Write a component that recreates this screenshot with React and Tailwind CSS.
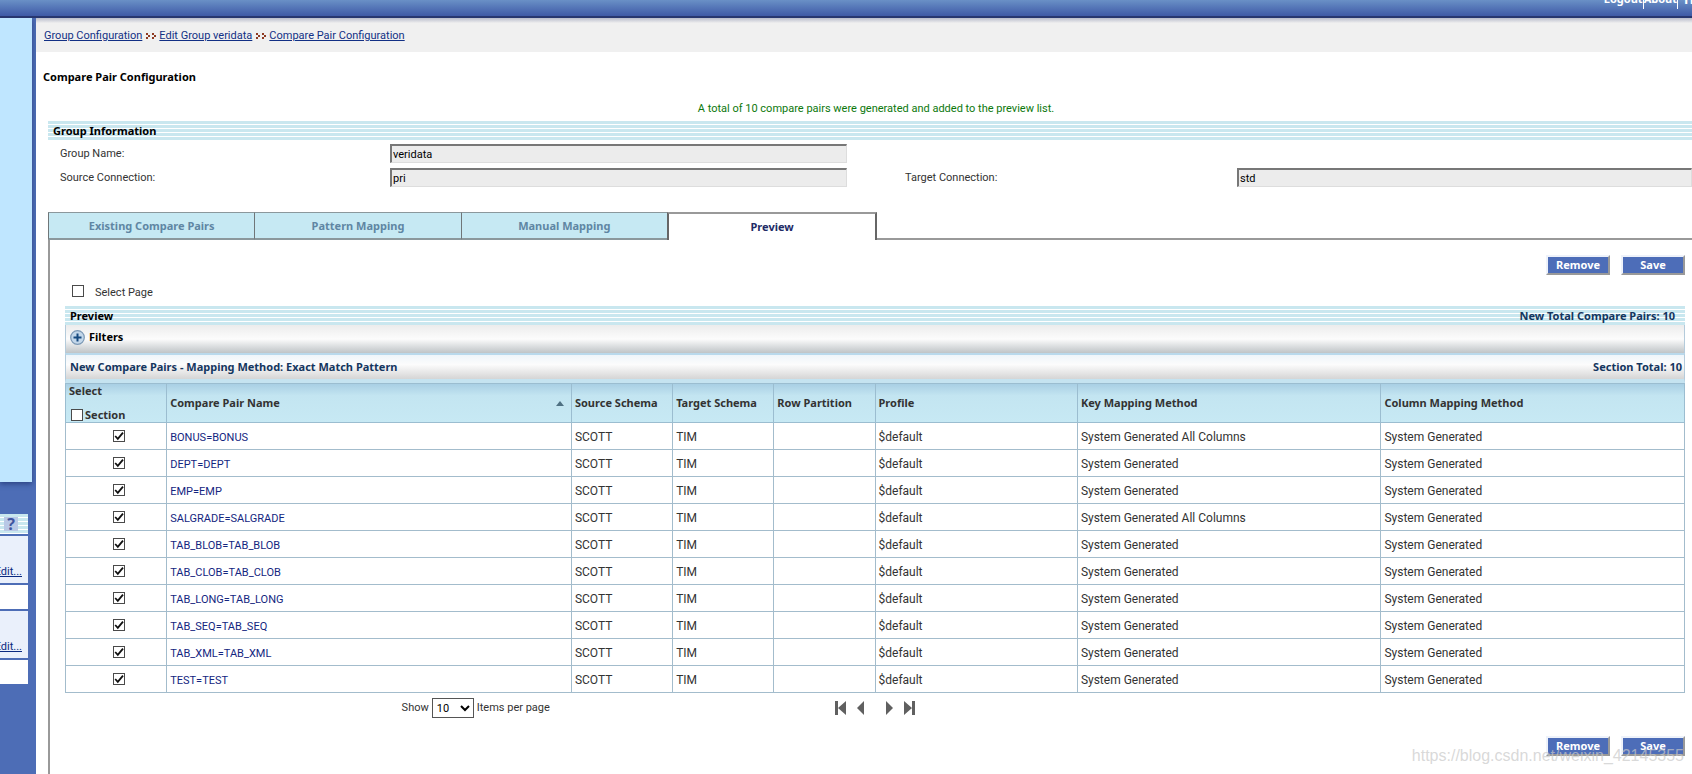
import { useState } from 'react';

const breadcrumbs = ['Group Configuration', 'Edit Group veridata', 'Compare Pair Configuration'];

const tabs = ['Existing Compare Pairs', 'Pattern Mapping', 'Manual Mapping', 'Preview'];

const comparePairs = [
  { table: 'BONUS', keyMapping: 'System Generated All Columns' },
  { table: 'DEPT', keyMapping: 'System Generated' },
  { table: 'EMP', keyMapping: 'System Generated' },
  { table: 'SALGRADE', keyMapping: 'System Generated All Columns' },
  { table: 'TAB_BLOB', keyMapping: 'System Generated' },
  { table: 'TAB_CLOB', keyMapping: 'System Generated' },
  { table: 'TAB_LONG', keyMapping: 'System Generated' },
  { table: 'TAB_SEQ', keyMapping: 'System Generated' },
  { table: 'TAB_XML', keyMapping: 'System Generated' },
  { table: 'TEST', keyMapping: 'System Generated' },
];

const stripes = 'bg-[repeating-linear-gradient(to_bottom,#c9e7ef_0px,#c9e7ef_3px,#ffffff_3px,#ffffff_4px)]';

const bold = "font-bold font-['Noto_Sans','DejaVu_Sans_Condensed',sans-serif]";

const Checkbox = ({ id, checked, onChange, label }) => (
  <span className="relative inline-block w-3 h-3 align-middle">
    <input
      id={id}
      type="checkbox"
      checked={checked}
      onChange={onChange}
      aria-label={label}
      className="block appearance-none w-3 h-3 bg-white border border-[#4a4a4a]"
    />
    {checked && (
      <svg viewBox="0 0 12 12" className="absolute inset-0 w-3 h-3 pointer-events-none">
        <path d="M2.2 6 L4.8 8.8 L10 2.6" fill="none" stroke="#111" strokeWidth="1.8" />
      </svg>
    )}
  </span>
);

const ReadOnlyField = ({ id, value }) => (
  <input
    id={id}
    type="text"
    readOnly
    defaultValue={value}
    className="block w-full h-[19px] pl-px bg-[#ececec] text-black border-t-2 border-l-2 border-t-[#777] border-l-[#777] border-r border-b border-r-[#ddd] border-b-[#ddd] outline-none"
  />
);

const ActionButtons = () => (
  <div className="flex justify-end gap-[11px]">
    {['Remove', 'Save'].map((name) => (
      <button
        key={name}
        type="button"
        className={`w-16 h-5 leading-4 bg-[#4d6db8] text-white border-2 border-t-[#eef2fa] border-l-[#eef2fa] border-r-[#999] border-b-[#999] ${bold}`}
      >
        {name}
      </button>
    ))}
  </div>
);

const Sidebar = () => (
  <aside className="w-9 shrink-0 bg-[#4d6db6] overflow-hidden">
    <div className="w-8 h-[464px] bg-[#bfe6ff] shadow-[0_2px_5px_rgba(30,50,110,0.7)]" />
    <div className="w-7 mt-8">
      <div className={`h-5 pl-1 flex items-center ${stripes}`}>
        <a href="#help" className={`w-[14px] h-[14px] bg-[#b9c8e6] text-[#3f55a0] text-base leading-[14px] text-center ${bold}`}>?</a>
      </div>
      {['conn', 'group'].map((panel) => (
        <div key={panel} className="mt-0.5">
          <div className="h-[47px] pr-1.5 pb-[3px] bg-[#eaf0fb] flex items-end justify-end">
            <a href={`#edit-${panel}`} className="underline text-[#0a2a80] leading-4">Edit...</a>
          </div>
          <div className="h-6 mt-0.5 bg-white" />
        </div>
      ))}
    </div>
  </aside>
);

const Pager = () => (
  <div className="flex items-center gap-[11px] text-[#606060]">
    <button type="button" aria-label="First page">
      <svg viewBox="0 0 11 14" className="block w-[11px] h-[14px]" fill="currentColor">
        <path d="M0 0h3v14H0zM11 0v14L3 7z" />
      </svg>
    </button>
    <button type="button" aria-label="Previous page">
      <svg viewBox="0 0 7 14" className="block w-[7px] h-[14px]" fill="currentColor">
        <path d="M7 0v14L0 7z" />
      </svg>
    </button>
    <button type="button" aria-label="Next page" className="ml-[11px]">
      <svg viewBox="0 0 7 14" className="block w-[7px] h-[14px]" fill="currentColor">
        <path d="M0 0v14l7-7z" />
      </svg>
    </button>
    <button type="button" aria-label="Last page">
      <svg viewBox="0 0 11 14" className="block w-[11px] h-[14px]" fill="currentColor">
        <path d="M8 0h3v14H8zM0 0v14l8-7z" />
      </svg>
    </button>
  </div>
);

const ComparePairTable = () => {
  const [selected, setSelected] = useState(comparePairs.map((p) => p.table));
  const [section, setSection] = useState(false);

  const toggle = (table) =>
    setSelected(selected.includes(table) ? selected.filter((t) => t !== table) : [...selected, table]);

  const toggleSection = () => {
    setSelected(section ? [] : comparePairs.map((p) => p.table));
    setSection(!section);
  };

  const th = `border border-[#9bbdd0] px-[3px] text-left ${bold}`;
  const td = 'border border-[#a3bccc] px-[3px]';

  return (
    <table className="w-full table-fixed border-collapse text-xs text-[#333]">
      <thead>
        <tr className="h-[39px] text-[11px] bg-linear-to-b from-[#a9cfe4] via-[#c3e5f1] via-30% to-[#c7e9f4]">
          <th className={`${th} w-[6.25%]`}>
            <div className="h-[38px] flex flex-col justify-between leading-[14px]">
              <span>Select</span>
              <span className="pl-0.5 flex items-center gap-0.5">
                <Checkbox id="section" checked={section} onChange={toggleSection} />
                <label htmlFor="section">Section</label>
              </span>
            </div>
          </th>
          <th className={`${th} w-1/4`}>
            <div className="flex items-center justify-between pr-1">
              Compare Pair Name
              <svg viewBox="0 0 8 5" className="w-2 h-[5px]">
                <path d="M0 5L4 0l4 5z" fill="#4f7183" />
              </svg>
            </div>
          </th>
          <th className={`${th} w-[6.25%]`}>Source Schema</th>
          <th className={`${th} w-[6.25%]`}>Target Schema</th>
          <th className={`${th} w-[6.25%]`}>Row Partition</th>
          <th className={`${th} w-[12.5%]`}>Profile</th>
          <th className={`${th} w-[18.75%]`}>Key Mapping Method</th>
          <th className={`${th} w-[18.75%]`}>Column Mapping Method</th>
        </tr>
      </thead>
      <tbody>
        {comparePairs.map(({ table, keyMapping }) => (
          <tr key={table} className="h-[27px]">
            <td className={`${td} pl-2 text-center leading-none`}>
              <Checkbox checked={selected.includes(table)} onChange={() => toggle(table)} label={`Select ${table}`} />
            </td>
            <td className={`${td} pt-0.5`}>
              <a href={`#${table}`} className="text-[11px] text-[#14267f]">{table}={table}</a>
            </td>
            <td className={`${td} pt-0.5`}>SCOTT</td>
            <td className={`${td} pt-0.5`}>TIM</td>
            <td className={td}></td>
            <td className={`${td} pt-0.5`}>$default</td>
            <td className={`${td} pt-0.5`}>{keyMapping}</td>
            <td className={`${td} pt-0.5`}>System Generated</td>
          </tr>
        ))}
      </tbody>
    </table>
  );
};

const App = () => {
  const [selectPage, setSelectPage] = useState(false);
  const [pageSize, setPageSize] = useState('10');

  return (
    <div className="h-screen flex flex-col overflow-hidden relative bg-white text-[#333] text-[11px] leading-[14px] font-['Roboto','DejaVu_Sans_Condensed',sans-serif]">
      <header className="h-[18px] shrink-0 overflow-hidden border-b-2 border-[#27366f] bg-linear-to-b from-[#6a90c6] to-[#3f59a6] text-white">
        <nav className={`-mt-2 flex justify-end ${bold}`}>
          <a href="#logout" className="h-[17px] border-r border-white">Logout</a>
          <a href="#about" className="h-[17px] border-r border-white">About</a>
          <a href="#help" className="pl-1.5 w-[14px] overflow-hidden text-[13px]">Help</a>
        </nav>
      </header>

      <div className="flex-1 min-h-0 flex">
        <Sidebar />

        <main className="flex-1 min-w-0">
          <nav className="h-[34px] pl-2 pt-0.5 flex items-center gap-1 bg-linear-to-b from-[#b9bccb] via-[#f0f0f0] via-15% to-[#f0f0f0]">
            {breadcrumbs.map((crumb, i) => (
              <span key={crumb} className="flex items-center gap-[3px]">
                {i > 0 && (
                  <svg viewBox="0 0 10 6" className="w-[10px] h-1.5" fill="#8f3a22">
                    <path d="M0 0h2v2H0zM2 2h2v2H2zM0 4h2v2H0zM6 0h2v2H6zM8 2h2v2H8zM6 4h2v2H6z" />
                  </svg>
                )}
                <a href="#top" className="underline text-[#123085]">{crumb}</a>
              </span>
            ))}
          </nav>

          <h1 className={`mt-[18px] pl-[7px] text-black ${bold}`}>Compare Pair Configuration</h1>
          <p className="mt-[18px] pl-6 text-center text-[#0c780c]">
            A total of 10 compare pairs were generated and added to the preview list.
          </p>

          <section className="ml-3 mt-[5px]">
            <h2 className={`h-[19px] leading-[19px] pl-[5px] text-black ${bold} ${stripes}`}>Group Information</h2>
            <div className="mt-1 pl-3 grid grid-cols-[330fr_457fr_58fr_332fr_455fr] gap-y-[5px] items-center">
              <label htmlFor="group-name">Group Name:</label>
              <ReadOnlyField id="group-name" value="veridata" />
              <span className="col-span-3" />
              <label htmlFor="source">Source Connection:</label>
              <ReadOnlyField id="source" value="pri" />
              <span />
              <label htmlFor="target">Target Connection:</label>
              <ReadOnlyField id="target" value="std" />
            </div>
          </section>

          <div className="ml-3 mt-[25px] flex">
            {tabs.map((tab) => (
              <button
                key={tab}
                type="button"
                className={
                  tab === 'Preview'
                    ? `w-[12.8%] h-7 text-[#222b66] bg-white border-t-2 border-t-[#999] border-x-2 border-x-[#666] ${bold}`
                    : `w-[12.55%] h-7 text-[#5f86a3] bg-[#c6e9f3] border-t border-l border-t-[#8b989c] border-l-[#6f7678] border-b-2 border-b-[#8b989c] ${bold}`
                }
              >
                {tab}
              </button>
            ))}
            <div className="flex-1 border-b-2 border-[#999]" />
          </div>

          <section className="ml-3 h-full pl-[15px] pr-[7px] pt-[15px] border-l-2 border-[#999]">
            <ActionButtons />

            <div className="mt-[7px] pl-[7px] flex items-center gap-[11px]">
              <Checkbox id="select-page" checked={selectPage} onChange={() => setSelectPage(!selectPage)} />
              <label htmlFor="select-page" className="pt-1">Select Page</label>
            </div>

            <div className={`mt-1.5 h-[19px] pl-[5px] pr-2.5 flex items-center justify-between ${bold} ${stripes}`}>
              <h2 className="text-black">Preview</h2>
              <span className="text-[#14365f]">New Total Compare Pairs: 10</span>
            </div>

            <div className={`h-7 pl-1 pb-1 flex items-center gap-1 border-x border-[#b4cbdb] text-black bg-linear-to-b from-[#ececec] via-[#fcfcfc] via-50% to-[#bfc4c7] ${bold}`}>
              <button type="button" aria-label="Expand filters">
                <svg viewBox="0 0 15 15" className="block w-[15px] h-[15px]">
                  <circle cx="7.5" cy="7.5" r="6.8" fill="#c3d7ea" stroke="#7b98b5" strokeWidth="1.2" />
                  <path d="M7.5 3.5v8M3.5 7.5h8" stroke="#164a80" strokeWidth="2" />
                </svg>
              </button>
              Filters
            </div>

            <div className={`h-[30px] pl-1 pr-0.5 flex items-center justify-between border-x border-x-[#b4cbdb] border-t-2 border-t-[#b9d9ec] border-b-4 border-b-[#c5e3f0] text-[#14365f] bg-linear-to-b from-[#eef5fa] via-[#fcfcfc] via-40% to-[#d5d5d5] ${bold}`}>
              <h3>New Compare Pairs - Mapping Method: Exact Match Pattern</h3>
              <span>Section Total: 10</span>
            </div>

            <ComparePairTable />

            <div className="mt-[5px] flex items-center">
              <div className="w-[47.5%] flex items-center justify-center gap-[3px] pl-[52px]">
                <label htmlFor="page-size">Show</label>
                <select
                  id="page-size"
                  value={pageSize}
                  onChange={(e) => setPageSize(e.target.value)}
                  className="w-[42px] h-5 bg-white text-black border border-[#555]"
                >
                  <option>10</option>
                  <option>25</option>
                  <option>50</option>
                </select>
                <span>Items per page</span>
              </div>
              <Pager />
            </div>

            <div className="mt-[18px]">
              <ActionButtons />
            </div>
          </section>
        </main>
      </div>

      <div className="absolute right-2 bottom-2 text-base leading-5 text-[#c8c8c8]/70 font-['Liberation_Sans',sans-serif] pointer-events-none">
        https://blog.csdn.net/weixin_42145355
      </div>
    </div>
  );
};

export default App;
